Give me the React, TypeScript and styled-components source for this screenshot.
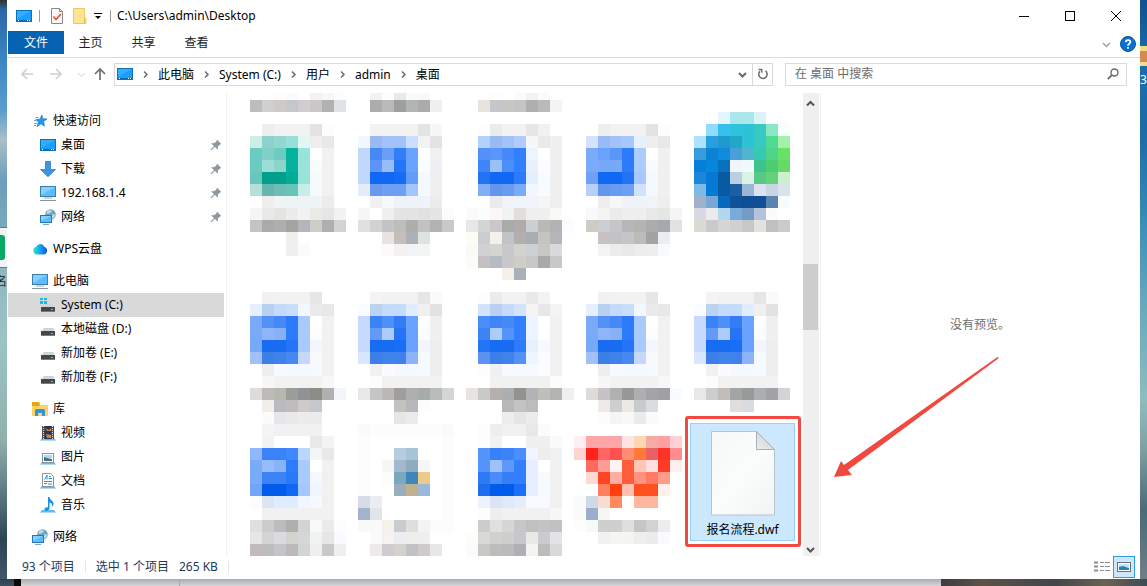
import React from "react";
import styled, { createGlobalStyle } from "styled-components";

const Global = createGlobalStyle`
  * { box-sizing: border-box; }
  body { margin: 0; font: 12px/24px "Noto Sans", "Noto Sans CJK SC", sans-serif; color: #000; background: #fff; }
  button, input { font: inherit; color: inherit; border: 0; padding: 0; margin: 0; background: none; }
  a { color: inherit; text-decoration: none; }
  h1, ul { margin: 0; padding: 0; font: inherit; list-style: none; }
  svg { display: block; flex: none; }
`;

/* ---------- desktop behind the window ---------- */

const Desktop = styled.div`
  display: grid;
  grid-template-columns: 7px minmax(0, 1fr) 7px;
  grid-template-rows: 1fr 7px;
  min-height: 100vh;
  overflow: hidden;
`;
const LeftEdge = styled.div`
  display: flex;
  flex-direction: column;
  overflow: hidden;
  background: linear-gradient(#33302c 0, #2a66a5 9px, #3c86c4 60px, #5a9dcf 110px, #a9bfc8 140px, #6c9dbb 180px, #79a9bd 227px, #8fb7c2 270px, #9cc4c4 340px, #8fb0ab 440px, #55717c 500px, #2c4453 540px, #40586a 100%);
`;
const BrowserCard = styled.div`
  height: 41px;
  margin-top: 227px;
  padding: 7px 2px 7px 0;
  background: #f1f4f4;
  border: solid #6b7a80;
  border-width: 1px 0;
`;
const GreenChip = styled.div`
  height: 25px;
  border-radius: 0 3px 3px 0;
  background: #0aa866;
`;
const EdgeLabel = styled.span<{ $right?: boolean }>`
  display: flex;
  justify-content: ${(p) => (p.$right ? "flex-end" : "flex-start")};
  color: ${(p) => (p.$right ? "#222" : "#fff")};
  line-height: 28px;
`;
const RightEdge = styled.div`
  display: flex;
  flex-direction: column;
  overflow: hidden;
  background: linear-gradient(#12518d 0, #1b6dac 60px, #1d6aa5 130px, #2f86b5 200px, #63a8bd 300px, #8fbcc0 400px, #7f9fa0 450px, #4b6a78 510px, #6e8087 100%);
`;
const FolderTab = styled.div`
  height: 20px;
  margin-top: 46px;
  background: #d58a55;
  border: solid #f3dc86;
  border-width: 5px 0 4px;
`;
const BottomEdge = styled.div`
  grid-column: 1 / -1;
  display: flex;
  background: linear-gradient(#00000040, #00000010), linear-gradient(90deg, #3d5666 0 14px, #0b0b0d 14px 21px, #e4e5e7 21px);
`;
const TaskDivider = styled.div`
  width: 180px;
  border-right: 1px solid #a9aaad;
`;
const TaskScene = styled.div`
  width: 206px;
  margin-left: auto;
  background: linear-gradient(90deg, #3c3d3f, #5c5248 20%, #40464a 55%, #6b6153 80%, #3b4c57);
`;

/* ---------- window frame ---------- */

const Window = styled.main`
  display: flex;
  flex-direction: column;
  min-width: 0;
  background: #fff;
`;
const TitleBar = styled.header`
  display: flex;
  align-items: center;
  height: 31px;
  padding: 0 1px 0 9px;
`;
const TitleRule = styled.span`
  width: 1px;
  height: 12px;
  background: #9a9a9a;
`;
const QuickBar = styled.div`
  display: flex;
  align-items: center;
  gap: 7px;
  margin-right: 6px;
`;
const QuickButton = styled.button<{ $width: number }>`
  display: flex;
  justify-content: center;
  width: ${(p) => p.$width}px;
`;
const Title = styled.h1`
  flex: 1;
`;
const CaptionButton = styled.button`
  display: grid;
  place-items: center;
  width: 46px;
  height: 31px;
`;
const Ribbon = styled.nav`
  display: flex;
  height: 27px;
  padding: 0 4px 0 1px;
  border-bottom: 1px solid #dadbdc;
`;
const RibbonTab = styled.button<{ $file?: boolean }>`
  width: ${(p) => (p.$file ? 56 : 53)}px;
  height: 23px;
  line-height: 23px;
  background: ${(p) => (p.$file ? "#0563b1" : "none")};
  color: ${(p) => (p.$file ? "#fff" : "#222")};
`;
const RibbonEnd = styled.div`
  display: flex;
  align-items: center;
  gap: 9px;
  margin-left: auto;
`;
const AddressRow = styled.div`
  display: flex;
  align-items: center;
  height: 35px;
  padding: 0 13px 3px 12px;
`;
const NavButton = styled.button<{ $width: number }>`
  display: grid;
  place-items: center;
  width: ${(p) => p.$width}px;
  height: 24px;
`;
const AddressBox = styled.div`
  display: flex;
  align-items: center;
  flex: 655 1 0;
  height: 23px;
  padding-left: 2px;
  border: 1px solid #d9d9d9;
`;
const Crumbs = styled.ul`
  display: flex;
  align-items: center;
  flex: 1;
  line-height: 21px;
`;
const Crumb = styled.li`
  display: flex;
  align-items: center;
`;
const CrumbArrow = styled.span`
  display: grid;
  place-items: center;
  width: 25px;
`;
const BoxButton = styled.button<{ $ruled?: boolean }>`
  display: grid;
  place-items: center;
  width: 20px;
  height: 21px;
  border-left: ${(p) => (p.$ruled ? "1px solid #d9d9d9" : "0")};
`;
const SearchBox = styled.label`
  display: flex;
  align-items: center;
  flex: 324 1 0;
  height: 23px;
  margin-left: 12px;
  padding: 0 7px 0 9px;
  border: 1px solid #d9d9d9;
`;
const SearchInput = styled.input`
  flex: 1;
  min-width: 0;
  height: 21px;
  outline: 0;
  &::placeholder { color: #6d6d6d; opacity: 1; }
`;

/* ---------- panes ---------- */

const Body = styled.div`
  display: flex;
  flex: 1;
`;
const Sidebar = styled.nav`
  width: 220px;
  flex: none;
  padding: 16px 2px 7px 1px;
  border-right: 1px solid #f0f0f0;
`;
const TreeGroup = styled.ul`
  & + & { margin-top: 8px; }
`;
const TreeRow = styled.a<{ $child?: boolean; $active?: boolean }>`
  display: flex;
  align-items: center;
  gap: 5px;
  height: 24px;
  padding-left: ${(p) => (p.$child ? 32 : 24)}px;
  padding-right: 2px;
  background: ${(p) => (p.$active ? "#d9d9d9" : "none")};
`;
const TreeLabel = styled.span`
  flex: 1;
`;
const FileArea = styled.section`
  width: 576px;
  flex: none;
  padding-left: 23px;
  overflow: hidden;
`;
const FileGrid = styled.div`
  display: grid;
  grid-template-columns: repeat(4, 108px) 1fr;
`;
const FileTile = styled.button`
  display: block;
  justify-self: start;
`;
const SelectedTile = styled.button`
  position: relative;
  justify-self: center;
  display: flex;
  flex-direction: column;
  align-items: center;
  width: 105px;
  height: 118px;
  margin-top: -1px;
  padding-top: 7px;
  background: #cce8ff;
  border: 1px solid #99d1ff;
  line-height: 28px;
`;
const Highlight = styled.span`
  position: absolute;
  inset: -8px -7px -7px -6px;
  border: 3px solid #f24a40;
  border-radius: 3px;
`;
const ScrollBar = styled.div`
  display: flex;
  flex-direction: column;
  width: 16px;
  flex: none;
  padding: 6px 0 4px;
  background: #f0f0f0;
`;
const ScrollButton = styled.button`
  display: grid;
  place-items: center;
  width: 15px;
  height: 7px;
`;
const ScrollTrack = styled.div`
  flex: 1;
  padding-top: 158px;
`;
const ScrollThumb = styled.div`
  width: 15px;
  height: 66px;
  background: #cdcdcd;
`;
const Preview = styled.section`
  position: relative;
  display: grid;
  place-items: center;
  flex: 1;
  margin-left: 1px;
  padding-right: 1px;
  border-left: 1px solid #f0f0f0;
  color: #6d6d6d;
`;
const ArrowMark = styled.svg`
  position: absolute;
  left: 12px;
  top: 262px;
`;
const StatusBar = styled.footer`
  display: flex;
  align-items: center;
  height: 23px;
  padding: 0 5px 2px 15px;
  color: #1e395b;
`;
const StatusText = styled.span<{ $ruled?: boolean }>`
  height: 12px;
  line-height: 12px;
  padding-right: 10px;
  margin-right: ${(p) => (p.$ruled ? 10 : 0)}px;
  border-right: ${(p) => (p.$ruled ? "1px solid #e6e6e6" : "0")};
  white-space: nowrap;
`;
const ViewSwitch = styled.div`
  display: flex;
  margin-left: auto;
`;
const ViewButton = styled.button<{ $active?: boolean }>`
  display: grid;
  place-items: center;
  width: 22px;
  height: 22px;
  background: ${(p) => (p.$active ? "#cce8ff" : "none")};
  border: 1px solid ${(p) => (p.$active ? "#2f9be0" : "transparent")};
`;

/* ---------- pixelated file tiles ---------- */

const CELL = 12;

function Mosaic({ rows, cropTop = 0 }: { rows: string[]; cropTop?: number }) {
  const height = rows.length * CELL - cropTop;
  return (
    <svg width={108} height={height} viewBox={`0 ${cropTop} 108 ${height}`} shapeRendering="crispEdges" aria-hidden>
      {rows.flatMap((row, y) =>
        row.split(" ").map((c, x) =>
          c === "-" || c === "" ? null : (
            <rect key={`${x}-${y}`} x={x * CELL} y={y * CELL} width={CELL} height={CELL} fill={`#${c}`} />
          )
        )
      )}
    </svg>
  );
}

const topRow: string[][] = [
  ["- - fdfdfb fafcfb - f2f2f2 f5f8f7 fcfcfc", "bfbdbb d0d0d0 cdcac8 c5c7ca d0cccf cac8c6 b3b1b0 dfe3e6"],
  ["- f2f2f2 fdfdfd e9e9e9 fafafa f9f9f9", "- acacaa bababa 9c9f9d b3b5b4 a9acab f0f0ee"],
  ["- fefefe fcfefe - fbfbfb f3f3f3 fbfbfb", "- e8e4dd c4c8cc c6c6c3 c2c4c5 b0aeae bababa f3f4f6"],
  ["", ""],
  ["", ""],
];

const rowOne: string[][] = [
  [
    "",
    "- eeeeee f2f2f2 f2f2f2 f2f2f2 e3e3e3 fdfdfd",
    "cdeee8 8bd2ca 92d8d0 98e0d7 e0f7f3 eeeeee e8e8e8",
    "6accc0 80d0c6 6dcbc0 05b29e 98e4da - f1f1f1",
    "6accc0 9cded6 8bd6cc 05b29e 98e4da f7fdfc f1f1f1",
    "68c6ba 02a08a 02a08a 02ac96 98e4da f5fbfa f1f1f1",
    "b5dfd9 66b5ae 6cbdb5 68c3b8 c8ece7 f5fbfa f1f1f1",
    "- eeeeee f0f5f4 edf5f4 edf5f4 edf4f3 ececec",
    "f5f5f3 e9e9e9 e4e4e2 ebedeb f2f2f2 ebeae7 e6e6e6 f2f2f2",
    "c6c4c3 a9aaae b0aeac a3a5a3 b4b6bb cfcdca afafb3 d3d3d5",
    "- - - f0f0ee",
    "- - - f0f0f0 fbfbfb",
    "",
    "",
  ],
  [
    "",
    "- f2f2f2 f2f2f2 f2f2f2 f2f2f2 e4e4e4 f7f7f7",
    "f2f7ff 9bbaf3 a2c2f9 a2c2f9 cbdeff f3f3f3 e3e3e3",
    "c3d9fc 4588f6 6a9ff8 327df8 6aa2ff - f1f1f1",
    "c3d9fc 5c95f8 98bbfa 2474f8 6aa2ff fafcff eef0f3",
    "c3d7fc 1168f4 1168f4 186cf4 629cfa f4f8ff eeeff1",
    "e5edfb 6899ec 6d9ff2 6d9ff2 a4c5fc f4f8ff eeeff1",
    "- f1f1f1 f6f8fb eef2f9 eef2f9 f0f3fa ebecee",
    "f6f6f6 - f0f0f0 e4e4e4 e5e3e1 e1e1e1 e5e5e5 fafdfc",
    "e1e0e0 d2d2d2 c4c4c6 bdbdbb aeaeae c0c3c2 b3b3b3 c8c9cb",
    "- - e6e5e3 c5beba acb0b7 dde2e2",
    "- - fafafa f3f2f0 f1f3f6 f3f5f4",
    "",
    "",
  ],
  [
    "",
    "- fdfdfd ebebeb f2f2f2 f2f2f2 e6e6e6 f1f1f1",
    "- b3d0ff 99bbf5 a2c2f9 b0ccff f6f7f8 eaeaea f0f0f0",
    "- 5291f8 5896fa 458af8 3380ff ecf4ff - f0f0f0",
    "- 3d85f8 9abffa 4d8ffa 3380ff eaf0fb fbfcff f0f0f0",
    "- 2473f4 1168f4 1168f4 2d7afa e3effd f8fbff f0f0f0",
    "- 82aef5 6297ec 699cf0 7aabfa f1f6ff f8fbff f0f0f0",
    "- fefefe ebebec f0f4fa f0f4fa f1f4f9 f6f6f8 efefef",
    "fafbf8 fafdfe faf7f8 f0f3f1 e1dfde eff0ee f0f0ee f8faf8",
    "e9e8e6 d3d5d3 cdc7cb a9aba8 b0aba9 cbcfd1 b9bab8 b3b3b3 fafcff",
    "fcfcf5 cdccd3 f2f1ea c1c3c5 b2b0ae a9adb5 c4c4c1 b4b6b8",
    "f9f9f5 d1d1d3 d4d4d2 c7c8ca d4d2ce ccd1d4 c9c7c5 d9dadd",
    "fbfcf6 c6c0c4 b5bbc2 c8c8c8 cfcdc8 c6c8c7 a9a9a9 c8c8c8",
    "- - - f5f0ea a9b0b7",
  ],
  [
    "",
    "- - eeeeee f2f2f2 f2f2f2 f2f2f2 e3e3e3 fdfdfd",
    "- d3e3ff 99bbf5 a2c2f9 a7c8ff e6f1ff eeeeee e8e8e8",
    "- 7aabfa 6aa1fa 5896f8 2d7afa acccff - f0f0f0",
    "- 7aabfa 78a8f8 78a8f8 2d7afa acccff f9fbff f0f0f0",
    "- 6fa0f5 1168f4 1168f4 2273f6 a8c8ff f4f8ff f0f0f0",
    "- b6d0fb 6297ec 699cf0 6da0f5 d1e2fb f4f8ff f0f0f0",
    "- - eeeeee f6f7f9 eff3f9 eff3f9 f0f3f8 eeeeee",
    "- f9f9f9 f4f4f4 ebebeb eeeeee eeeeee e8e8e8 e5e7e5 f5f5f5",
    "- d1cbc5 cbcfd3 c8c5c8 b5b8bb b6b4b0 acacac a7a9ae e1e2e4",
    "- - c8c2c2 c2c3c5 c5c5c5 bbbbbb a3a3a3 ecedf2",
    "- - f3f3f3 ececec e8e8e8 ededed eeeeee f9fafd",
    "",
    "",
  ],
  [
    "- - - e2f6fc aae7ed aae6ec d9f4f3",
    "- fdfefe 92dcfb 36bfed 2dc2dd 2dc3d5 38cac2 8ae6c3 f8fefa",
    "- ace3fe 289fde 1f98cf 23a6c8 2dc3d5 38cac2 4fdb92 a4f1aa",
    "- 389bdb 0b82d4 118cdd 48a0da 52b5ce 38c9b5 4fd588 68e166",
    "- 067fd8 0886de 0b71bb f2f5fa f0fafa 3dc48e 4ccd70 66da66",
    "- 1a87da 027ad6 0a59a3 bacee4 daf2e8 58c887 63d07a cbf1ce",
    "- 7ebae8 027ad6 0a59a3 1c5ea3 9eb6d6 dae3ef c8d6e4 dae3ed",
    "- a0b2cb 78a8d6 066abf 10529a 104f96 104f96 5a83b0 f8fafe",
    "- d7dae3 ebebeb b3d7f2 77abdc 739bc5 b2c3da fbfbfb",
    "- dbdad5 cacacc d6d4d4 d0d0cf c7c7c7 e3e2de c0c0c0 cacbd0",
    "",
    "",
    "",
    "",
  ],
];

const docLeft = [
  "",
  "- f1f1f1 f2f2f2 f2f2f2 f2f2f2 e6e6e6",
  "e6efff bad0f3 c5dafc c9deff f3f8ff eaeaea e8e8e8",
  "7aa9fa 5292f8 4489f6 2d7afa a8caff - f1f1f1",
  "7aa9fa 8cb5fa 86b0fa 2d7afa a8caff fcfdff f1f1f1",
  "78a8f8 186cf2 186cf2 2474f8 a8caff f2f7ff f1f1f1",
  "a0c0f8 3b7fe8 3f82ec 4488f2 c4d8fc f6faff f1f1f1",
  "- eeeeee f6faff f5f9ff f5f9ff f6faff f1f1f1",
  "- f7f7f7 f2f2f2 f2f2f2 f2f2f2 f2f2f2 f7f7f7",
];
const docRight = [
  "",
  "- f4f4f4 f2f2f2 f2f2f2 f2f2f2 e6e6e6 fafafa",
  "fafdff bcd2f3 c5dafc c5dafc e1eeff f0f0f0 e2e2e2",
  "c5dafc 3b82f6 4f8ff8 327df6 6aa2ff - f0f0f0",
  "c5dafc 629afa acccfc 2574f6 6aa2ff fbfdff f0f0f0",
  "c5dafc 186cf2 186cf2 1a6ef5 6aa2ff f2f7ff eeeef0",
  "d9e6fb 3b7fe8 3f82ec 3f82ec 8cb4fa f6faff eeeef0",
  "- f1f1f1 fafbff f5f9ff f5f9ff f6faff eeeef0",
  "- fcfcfc f2f2f2 f2f2f2 f2f2f2 f2f2f2 f2f2f2",
];
const shifted = (rows: string[]) => rows.map((r) => (r ? `- ${r}` : r));

const rowTwo: string[][] = [
  [
    ...docLeft,
    "dddcd8 bcbbb9 b7b7b0 9a9e9b 929195 8c8d87 b0b0b3 f2f5fa",
    "- f1eeea b8babd bdbbbd cdcbca c4c7cd",
    "- fdfafb e5e6e9 e9e9e9 ececec ececec",
  ],
  [
    ...docRight,
    "e9e8e7 c4c6c5 bbb9b6 9f9e9a afafaf a6abab b9bcba d4d5d7",
    "- - - c4c2bf b8b8ba fcfdff",
    "- - - e8e5e6 ebebeb",
  ],
  [
    "",
    "- fdfdfd ebebeb f2f2f2 f2f2f2 e9e9e9 f3f3f3",
    "- d3e3ff bad0f3 c5dafc d3e3ff f4f4f4 e7e7e7 f3f3f3",
    "- 4a8cf8 4085f6 4489f8 3380ff edf4ff - f1f1f1",
    "- 3d83f6 acccfc 5594fa 3380ff edf3ff fcfeff f1f1f1",
    "- 2474f6 186cf2 186cf2 2d7cfc e6f0ff f6faff f1f1f1",
    "- 5a93f0 3b7fe8 3f82ec 5292f6 eff5ff fafcff f1f1f1",
    "- fdfdfd eff0f1 f6faff f6faff f6faff fafcff f1f1f1",
    "- - f1f1f1 f1f1f1 f1f1f1 f1f1f1 f1f1f1 fcfcfc",
    "e8e4e1 c9cac7 b5b0ae acaeb0 93928e b1b3b6 bfbeba b4b5b3 eeeff1",
    "- - - bab8b7 c3c3c3 bcbcbe",
    "- - fefefc ecedf0 e6e6e8 ececec",
  ],
  [
    ...shifted(docLeft),
    "- dddcd8 c5c3c7 b0b0ae 9a9799 adb0ae a5a3a7 a0a0a2 f8fcff",
    "- - efeae7 cdcfd0 ece9e5 c9cacd dadcdf",
    "- - fdfbfb f5f5f5 f8f8f5 ebebee fafafa",
  ],
  [
    ...shifted(docRight),
    "- e9e8e7 cdcdcd c3bcb8 a2a5a3 97999a aaafb0 a4a2a4 d3d4d8",
    "- - - - e1ddda d8dce0",
    "",
  ],
];

const rowThree: string[][] = [
  [
    "- f4f4f4 f1f1f1 f1f1f1 f1f1f1 f1f1f1",
    "- f2f2f2 - - - e9e9e9 f4f4f4",
    "8fb8ff 3b82f6 3b82f6 4088ff bbd6ff f5f5f5 e9e9e9",
    "7aaafa 96bdfb 86b3fa 2d7cfc a8caff - f1f1f1",
    "7aaafa 3b82f6 3b82f6 2a79fa a8caff f5f9ff f1f1f1",
    "72a5f8 025ceb 025ceb 1067f2 a5c7ff f0f5ff f1f1f1",
    "fafcff dce5f3 dfebfe dfebfe f2f7ff f5f8fe f1f1f1",
    "- f1f1f1 f1f1f1 f1f1f1 f1f1f1 f1f1f1 f1f1f1",
    "e0dfde cdcbcf bdbcbb b0afae d0d4d4 f7faf8 ebebeb fcfdff",
    "e6e6e4 d4d4d4 dadbde d3d2ce d6d6d6 f1f3f1 e6e6e4 f8fafd",
    "c1bbb9 bdbdbd c4c5c8 bbbab8 d1d5d5 eeefee c9c9c7 eeeff1",
  ],
  [
    "fafafa fcfcfc fcfcfc fcfcfc fcfcfc fcfcfc fcfcfc fafafa",
    "fdfdfd - - - - - - fcfcfc",
    "fdfdfd - - b5cddf a8c3d5 - - fcfcfc",
    "fdfdfd - f6f6f6 a1b8cf 8eabc2 f5f6f6 - fcfcfc",
    "fdfdfd - fcfcfc 7aa8bf 3f86bb ecca8b - fcfcfc",
    "fdfdfd - - 9baebd bcb28e 9db8d9 - fcfcfc",
    "d6dde7 ecedf1 - - fefefe fefefe - fcfcfc",
    "a2b4cd e1e4e9 - - - - - fcfcfc",
    "f9f9f9 f9f9f9 f5f2ec c8cccf dddfde f3f3f3 fcfcfc fcfcfc",
    "- fafafa f6f2f1 ededf0 eeeeeb efeff2",
    "- ecebea cfcbd0 d2d2d0 c3c1c5 cfcbcd e5e7e9",
  ],
  [
    "- fdfdfd eeeeee f1f1f1 f1f1f1 e8e8e8 fbfbfb",
    "- fdfdfd f2f2f2 - - f0f0f0 f0f0f0 fafafa",
    "- 5594fb 3680f8 3b82f6 4a8eff f0f5ff eeeeee f1f1f1",
    "- 5594fb 9cc1fb 5e99fa 3380ff e6eeff - f1f1f1",
    "- 2e7af6 4a8cfa 377ff8 3380ff e6eeff f7faff f1f1f1",
    "- 1f6ced 025ceb 025ceb 1d6ff7 e6eeff f7faff f1f1f1",
    "- edf2fc dce4f3 dfe9fc e5edfd f8faff f8faff f1f1f1",
    "- fdfdfd eeeeee f1f1f1 f1f1f1 f1f1f1 f1f1f1 f7f7f7",
    "- cdcccb e2e0df d8d6d4 c8c7c8 bdc1bf c2c3c2 c1c1c1",
    "fefdfa d8dad8 d0d0cf cfcecc c6c7ca e8e8e6 cacacf e2e3e5",
    "fdfbf9 c8c8c6 bebdbb bbbbbb afafb4 f4f3f1 bbbdba d9d9d9",
  ],
  [
    "",
    "ffeef0 ffa5a8 ffa5a8 ffa5a8 ffe4e4 fed6b0 f2aba5 ff9fa2 ffd0d4",
    "ffd3d3 ff231c ff6663 ff524f ff8c74 ff7a38 eb6065 ff322a ff8d8d",
    "- ff6a5e ff9c94 fff3f3 ff5c3d ffc5b7 ffdedd ff3b26 ffeeee",
    "- ffdad5 ff4524 ffada3 ff5c3d ff937f ff7a60 ff9b88",
    "- - ff7f5e ff400e ffc0b1 ff501f ff501f fff0ee",
    "fafafa cfdae6 fadcd3 ff8a62 - ffb69f ffb69f",
    "fafafa 9aaecb f6f6f6",
    "fdfdfd f9f9f9 cfcfcf cfcfcf dfdfdf c6c6c5 d2d2d2 ececef",
    "- - f1f1ef f5f5f3 f4f4f3 eeeeec ececec fafafd",
    "",
  ],
];

/* ---------- icons ---------- */

const Icon = ({ children, w = 16, h = 16 }: { children: React.ReactNode; w?: number; h?: number }) => (
  <svg width={w} height={h} viewBox={`0 0 ${w} ${h}`} fill="none" aria-hidden>
    {children}
  </svg>
);

const DesktopIcon = () => (
  <Icon>
    <rect x=".5" y="2.5" width="15" height="11" fill="#1a9fff" stroke="#0b72b5" />
    <path d="M1 3h14L1 11z" fill="#35adff" />
    <path d="M1 12.5h14" stroke="#0b66ad" />
    <path d="M2 12.5h1M11 12.5h1M13 12.5h1" stroke="#fff" />
  </Icon>
);
const StarIcon = () => (
  <Icon>
    <path d="M9.800 2l1 3.700 4.200.3-3.400 2.600.9 4.600-3.500-2.400-4 2.800 1.500-4.700-2.700-2.300 4.200-.3z" fill="#2196ea" stroke="#1583cf" strokeWidth=".7" />
    <path d="M3.500 4.500h3M2 7.500h2M2 10.500h3M2 12.500h2" stroke="#4fb0ee" />
  </Icon>
);
const DownloadIcon = () => (
  <Icon>
    <path d="M5.500.5h5v8h5L8 15.700.5 8.500h5z" fill="#3c95e4" stroke="#2a7dcb" strokeWidth=".8" />
  </Icon>
);
const ComputerIcon = () => (
  <Icon>
    <rect x=".5" y="1.500" width="15" height="10" fill="#5cbcff" stroke="#3c7ea8" />
    <path d="M1 2h14L1 10z" fill="#86d0ff" />
    <path d="M4 13h8" stroke="#9ab0bd" />
    <path d="M0 15.500h16" stroke="#8796a1" />
  </Icon>
);
const NetworkIcon = () => (
  <Icon>
    <circle cx="10.500" cy="5.500" r="5.300" fill="#6fa5bf" />
    <path d="M7 2c2-1.500 4-1 5 0-1 2-3 3-5 3zM11 6c2-1 4-1 4.500 0-.5 2-1.500 3.500-3.500 4z" fill="#b7dbe6" />
    <rect x=".5" y="6.500" width="11" height="7" fill="#58bdff" stroke="#2879ad" />
    <path d="M1 7h10L1 12z" fill="#88d1ff" />
    <path d="M3 15.500h6" stroke="#79a9c9" />
  </Icon>
);
const CloudIcon = () => (
  <Icon>
    <defs>
      <linearGradient id="cloud" x1="0" y1="0" x2="1" y2="0">
        <stop offset="0" stopColor="#3be0b5" />
        <stop offset=".4" stopColor="#18aef0" />
        <stop offset="1" stopColor="#0b55e6" />
      </linearGradient>
    </defs>
    <path d="M5 13.500a4 4 0 01-.8-7.800A4.500 4.500 0 0112.500 6a3.900 3.900 0 01-.5 7.500z" fill="url(#cloud)" />
  </Icon>
);
const DriveIcon = ({ system }: { system?: boolean }) => (
  <Icon>
    {system && <path d="M0 1h3v2H0zM4 1h3v2H4zM0 4h3v3H0zM4 4h3v3H4z" fill="#1bb6ef" />}
    <path d="M4 7h9l2 4H1z" fill="#d1d4d7" />
    <rect x="1" y="10" width="14" height="5" fill="#42474a" />
    <path d="M1 14.500h14" stroke="#777c80" />
    <path d="M11 12.500h2" stroke="#4fe264" />
  </Icon>
);
const LibraryIcon = () => (
  <Icon>
    <path d="M0 2h7l1 2h8v11H0z" fill="#ffd45e" />
    <path d="M0 1h7l1 2-1 2H0z" fill="#e6a514" />
    <path d="M3 15V9.500q0-1.500 1.500-1.500h7Q13 8 13 9.500V15h-3v-3H6v3z" fill="#3294dc" />
  </Icon>
);
const Tray = () => <path d="M2 13h12l2 2.500H0z" fill="#5ebcf5" />;
const VideoIcon = () => (
  <Icon>
    <Tray />
    <path d="M2 1h12v13H2z" fill="#4b4b50" />
    <path d="M5 1h6v13H5z" fill="#27345f" />
    <path d="M5 3l4 2 2-2v3H7zM6 9l5 1v3H7z" fill="#d6803b" />
    <path d="M3.500 1v13M12.500 1v13" stroke="#ddd" strokeDasharray="1 1" />
  </Icon>
);
const PictureIcon = () => (
  <Icon>
    <Tray />
    <rect x="2.500" y="4.500" width="11" height="9" fill="#fff" stroke="#8e9499" />
    <path d="M4 6h8v3H4z" fill="#a9d9f5" />
    <path d="M4 8l3 1 5 1v2H4z" fill="#3f7688" />
  </Icon>
);
const DocumentIcon = () => (
  <Icon>
    <Tray />
    <path d="M2.500.5h8l3 3v10h-11z" fill="#fff" stroke="#8e9499" />
    <path d="M4.500 6.500L7 2v4.500M9 3.500h2M8.500 5.500h3.500M4 8.500h8M4 10.500h3M8 11h4" stroke="#2e8ec9" />
  </Icon>
);
const MusicIcon = () => (
  <Icon>
    <Tray />
    <path d="M8 0h1.500c0 3 4 3.500 4 6.500 0 1.500-.5 2.500-1.500 3.500.8-2.500-.5-4-2.500-4.500V11c0 3-5 4-5 1.500C4.500 10.500 6.500 10 8 10.500z" fill="#1593e6" />
  </Icon>
);
const PinIcon = () => (
  <Icon w={12} h={12}>
    <path d="M7 1l4 4-1.200.2-2 2-.3 3L4.800 7.500 1.500 11 1 10.500l3.300-3.300L1.800 4.500l3-.3 2-2z" fill="#8c979f" stroke="#8c979f" strokeWidth=".6" />
  </Icon>
);

type Dir = "right" | "down" | "up";
const chevrons: Record<Dir, string> = { right: "M3 1.500L6 4.500 3 7.500", down: "M1 3l3.500 3.500L8 3", up: "M1 6.500L4.500 3 8 6.500" };
const Chevron = ({ dir, color = "#6a6a6a", width = 1.5 }: { dir: Dir; color?: string; width?: number }) => (
  <Icon w={9} h={9}>
    <path d={chevrons[dir]} stroke={color} strokeWidth={width} />
  </Icon>
);
const NavArrow = ({ d, color }: { d: string; color: string }) => (
  <Icon w={14} h={14}>
    <path d={d} stroke={color} strokeWidth="1.700" />
  </Icon>
);

/* ---------- data ---------- */

type Node = { label: string; icon: React.ReactNode; pinned?: boolean; active?: boolean };
const tree: Node[][] = [
  [
    { label: "快速访问", icon: <StarIcon /> },
    { label: "桌面", icon: <DesktopIcon />, pinned: true },
    { label: "下载", icon: <DownloadIcon />, pinned: true },
    { label: "192.168.1.4", icon: <ComputerIcon />, pinned: true },
    { label: "网络", icon: <NetworkIcon />, pinned: true },
  ],
  [{ label: "WPS云盘", icon: <CloudIcon /> }],
  [
    { label: "此电脑", icon: <ComputerIcon /> },
    { label: "System (C:)", icon: <DriveIcon system />, active: true },
    { label: "本地磁盘 (D:)", icon: <DriveIcon /> },
    { label: "新加卷 (E:)", icon: <DriveIcon /> },
    { label: "新加卷 (F:)", icon: <DriveIcon /> },
  ],
  [
    { label: "库", icon: <LibraryIcon /> },
    { label: "视频", icon: <VideoIcon /> },
    { label: "图片", icon: <PictureIcon /> },
    { label: "文档", icon: <DocumentIcon /> },
    { label: "音乐", icon: <MusicIcon /> },
  ],
  [{ label: "网络", icon: <NetworkIcon /> }],
];
const crumbs = ["此电脑", "System (C:)", "用户", "admin", "桌面"];

export default function App() {
  return (
    <>
      <Global />
      <Desktop>
        <LeftEdge>
          <BrowserCard>
            <GreenChip />
          </BrowserCard>
          <EdgeLabel $right>名</EdgeLabel>
        </LeftEdge>
        <Window>
          <TitleBar>
            <QuickBar>
              <DesktopIcon />
              <TitleRule />
              <QuickButton $width={20} aria-label="属性">
                <Icon>
                  <path d="M2.500.5h8l3 3v12h-11z" fill="#fafafa" stroke="#8a8a8a" />
                  <path d="M10.500.5v3h3" stroke="#8a8a8a" />
                  <path d="M4.500 8.500l2.500 3 5-5.500" stroke="#e8562a" strokeWidth="1.800" />
                </Icon>
              </QuickButton>
              <QuickButton $width={12} aria-label="新建文件夹">
                <Icon w={14}>
                  <path d="M.5.5h11v9l1.500 1v5H.5z" fill="#ffe493" stroke="#ecc95c" />
                  <path d="M11.500 9.500v6" stroke="#e6bf4d" />
                </Icon>
              </QuickButton>
              <QuickButton $width={10} aria-label="自定义">
                <Icon w={8} h={8}>
                  <path d="M0 1.500h8" stroke="#000" />
                  <path d="M1 4h6L4 7z" fill="#000" />
                </Icon>
              </QuickButton>
              <TitleRule />
            </QuickBar>
            <Title>C:\Users\admin\Desktop</Title>
            <CaptionButton aria-label="最小化">
              <Icon w={10} h={10}><path d="M0 5.500h10" stroke="#000" /></Icon>
            </CaptionButton>
            <CaptionButton aria-label="最大化">
              <Icon w={10} h={10}><rect x=".5" y=".5" width="9" height="9" stroke="#000" /></Icon>
            </CaptionButton>
            <CaptionButton aria-label="关闭">
              <Icon w={10} h={10}><path d="M0 0l10 10M10 0L0 10" stroke="#000" /></Icon>
            </CaptionButton>
          </TitleBar>

          <Ribbon>
            <RibbonTab $file>文件</RibbonTab>
            <RibbonTab>主页</RibbonTab>
            <RibbonTab>共享</RibbonTab>
            <RibbonTab>查看</RibbonTab>
            <RibbonEnd>
              <button aria-label="展开功能区"><Chevron dir="down" color="#a0a0a0" /></button>
              <button aria-label="帮助">
                <Icon>
                  <circle cx="8" cy="8" r="7.500" fill="#0a6fd0" stroke="#07539b" />
                  <path d="M5.800 6.300c0-3 4.600-2.800 4.600-.2C10.400 7.800 8 7.800 8 9.800M8 11v1.800" stroke="#fff" strokeWidth="1.700" />
                </Icon>
              </button>
            </RibbonEnd>
          </Ribbon>

          <AddressRow>
            <NavButton $width={16} aria-label="后退"><NavArrow color="#d0d0d0" d="M13 7H2M7 2L2 7l5 5" /></NavButton>
            <NavButton $width={42} aria-label="前进"><NavArrow color="#d0d0d0" d="M1 7h11M7 2l5 5-5 5" /></NavButton>
            <NavButton $width={8} aria-label="最近位置"><Chevron dir="down" color="#d0d0d0" width={1} /></NavButton>
            <NavButton $width={29} aria-label="上移"><NavArrow color="#707070" d="M7 13V2M2 7l5-5 5 5" /></NavButton>
            <AddressBox>
              <DesktopIcon />
              <Crumbs>
                {crumbs.map((c) => (
                  <Crumb key={c}>
                    <CrumbArrow><Chevron dir="right" /></CrumbArrow>
                    <a href="#">{c}</a>
                  </Crumb>
                ))}
              </Crumbs>
              <BoxButton aria-label="历史"><Chevron dir="down" width={2} /></BoxButton>
              <BoxButton $ruled aria-label="刷新">
                <Icon w={12} h={12}>
                  <path d="M3 3.200a4.200 4.200 0 105.500-.3" stroke="#6a6a6a" strokeWidth="1.500" />
                  <path d="M1.500 1.500h3.300v3.300" stroke="#6a6a6a" strokeWidth="1.300" />
                </Icon>
              </BoxButton>
            </AddressBox>
            <SearchBox>
              <SearchInput type="search" placeholder="在 桌面 中搜索" aria-label="搜索" />
              <Icon w={12} h={12}>
                <circle cx="7.500" cy="4.500" r="3.500" stroke="#6a6a6a" strokeWidth="1.400" />
                <path d="M5 7L.8 11.200" stroke="#6a6a6a" strokeWidth="1.800" />
              </Icon>
            </SearchBox>
          </AddressRow>

          <Body>
            <Sidebar>
              {tree.map((group, g) => (
                <TreeGroup key={g}>
                  {group.map((n, i) => (
                    <li key={n.label}>
                      <TreeRow href="#" $child={i > 0} $active={n.active}>
                        {n.icon}
                        <TreeLabel>{n.label}</TreeLabel>
                        {n.pinned && <PinIcon />}
                      </TreeRow>
                    </li>
                  ))}
                </TreeGroup>
              ))}
            </Sidebar>
            <FileArea>
              <FileGrid>
                {topRow.map((t, i) => (
                  <FileTile key={`a${i}`} aria-label="文件"><Mosaic rows={t} cropTop={5} /></FileTile>
                ))}
                {[...rowOne, ...rowTwo, ...rowThree].map((t, i) => (
                  <FileTile key={`b${i}`} aria-label="文件"><Mosaic rows={t} /></FileTile>
                ))}
                <SelectedTile>
                  <svg width="64" height="85" viewBox="0 0 64 85" aria-hidden>
                    <defs>
                      <linearGradient id="sheet" x1="0" y1="0" x2="1" y2="1">
                        <stop offset="0" stopColor="#f6f7f7" />
                        <stop offset=".5" stopColor="#fbfcfc" />
                        <stop offset="1" stopColor="#f2f3f4" />
                      </linearGradient>
                      <linearGradient id="fold" x1="0" y1="1" x2="1" y2="0">
                        <stop offset="0" stopColor="#eeeeee" />
                        <stop offset="1" stopColor="#c9cbcd" />
                      </linearGradient>
                    </defs>
                    <path d="M.5.5h45l18 18v65.500H.5z" fill="url(#sheet)" stroke="#b9c3ca" />
                    <path d="M45.500.5v18h18z" fill="url(#fold)" stroke="#aab1b6" />
                  </svg>
                  报名流程.dwf
                  <Highlight />
                </SelectedTile>
              </FileGrid>
            </FileArea>
            <ScrollBar>
              <ScrollButton aria-label="向上滚动"><Chevron dir="up" color="#555" width={2} /></ScrollButton>
              <ScrollTrack><ScrollThumb /></ScrollTrack>
              <ScrollButton aria-label="向下滚动"><Chevron dir="down" color="#555" width={2} /></ScrollButton>
            </ScrollBar>
            <Preview>
              没有预览。
              <ArrowMark width="168" height="126" viewBox="0 0 168 126" aria-hidden>
                <path d="M1 122L8 106l3 4L164.500 2q1.500 0 .8 1.500L15 115l4 5z" fill="#f04a40" />
              </ArrowMark>
            </Preview>
          </Body>

          <StatusBar>
            <StatusText $ruled>93 个项目</StatusText>
            <StatusText>选中 1 个项目</StatusText>
            <StatusText $ruled>265 KB</StatusText>
            <ViewSwitch>
              <ViewButton aria-label="详细信息">
                <Icon>
                  <path d="M0 3.500h4M0 7.500h4M0 11.500h4" stroke="#8a8f94" strokeWidth="2" />
                  <path d="M6 3.500h4M11 3.500h5M6 7.500h4M11 7.500h5M6 11.500h4M11 11.500h5" stroke="#8a8f94" />
                </Icon>
              </ViewButton>
              <ViewButton $active aria-label="大缩略图">
                <Icon>
                  <rect x="1.500" y="3.500" width="13" height="9" fill="#fff" stroke="#6b7075" />
                  <path d="M3 5h10v3H3z" fill="#bfe3f8" />
                  <path d="M3 8l4-1 6 2v2H3z" fill="#2f7fb0" />
                </Icon>
              </ViewButton>
            </ViewSwitch>
          </StatusBar>
        </Window>
        <RightEdge>
          <FolderTab />
          <EdgeLabel>3</EdgeLabel>
        </RightEdge>
        <BottomEdge>
          <TaskDivider />
          <TaskScene />
        </BottomEdge>
      </Desktop>
    </>
  );
}
